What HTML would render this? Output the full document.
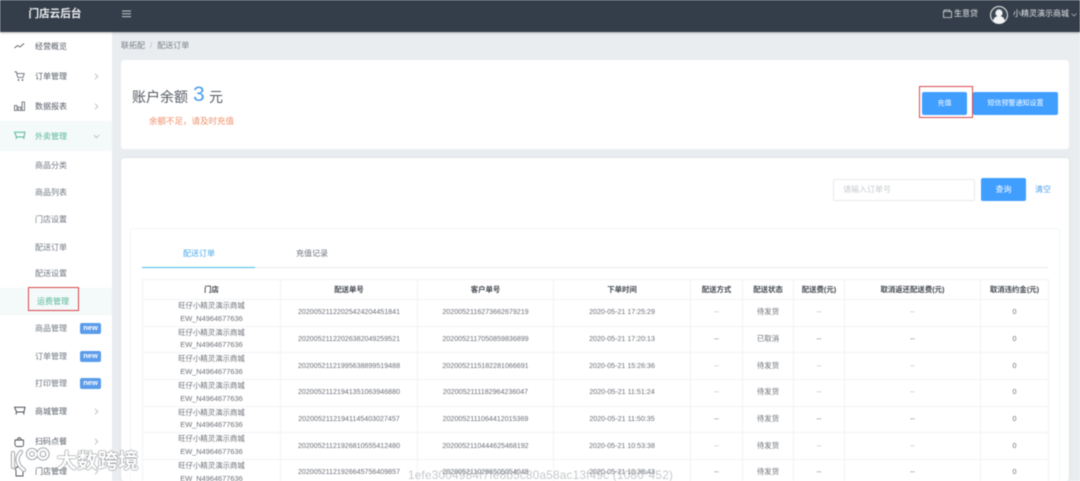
<!DOCTYPE html>
<html lang="zh"><head><meta charset="utf-8"><title>配送订单</title>
<style>
*{box-sizing:border-box}
html,body{margin:0;padding:0}
body{width:1080px;height:481px;overflow:hidden;position:relative;background:#fff;font-family:"Liberation Sans","Noto Sans CJK SC",sans-serif;color:#606266}
.a{position:absolute;white-space:nowrap}
#wrap{position:absolute;left:0;top:0;width:1080px;height:481px;overflow:hidden;filter:blur(.5px)}
.m{left:35px;font-size:8px;color:#555c66;line-height:12px}
.s{left:35px;font-size:8px;color:#6f7680;line-height:12px}
.chev{left:94px}
.new{left:80px;width:21px;height:10.500px;background:#5a9bea;color:#fff;border-radius:2px;font-size:7.500px;font-weight:bold;text-align:center;line-height:10.500px}
.btn{background:#409eff;color:#fff;border-radius:2px;text-align:center;font-size:7px}
table{position:absolute;left:142px;top:279px;border-collapse:collapse;table-layout:fixed;width:906px;font-size:7.100px;color:#6a6f76;text-align:center}
td,th{border:1px solid #f0f3f6;padding:0;overflow:hidden;white-space:nowrap}
th{height:20px;color:#444950;font-size:7.400px;font-weight:bold}
td{height:26.670px;line-height:12.800px}
td.n{font-size:7.400px}
td.z{color:#a6abb1}
</style></head><body><div id="wrap">
<div class="a" style="left:112px;top:31px;width:968px;height:450px;background:#e9edf0"></div>

<!-- top bar -->
<div class="a" style="left:0;top:0;width:1080px;height:31.500px;background:#343e4a;box-shadow:0 1px 2px rgba(0,0,0,.25)"></div>
<div class="a" style="left:28.500px;top:6.500px;font-size:10.600px;font-weight:bold;color:#eef0f2;line-height:15px">门店云后台</div>
<svg class="a" style="left:122px;top:10px" width="10" height="8"><path d="M0 1h9M0 3.800h9M0 6.600h9" stroke="#c6cbd0" stroke-width="1"/></svg>
<svg class="a" style="left:943px;top:9px" width="10" height="10"><path d="M.5 2.500h8v6h-8zM.5 2.500l1-1.500h5l1 1.500" fill="none" stroke="#d5d8db" stroke-width=".8"/></svg>
<div class="a" style="left:954px;top:8px;font-size:8px;color:#e6e8ea;line-height:12px">生意贷</div>
<svg class="a" style="left:990px;top:6px" width="18" height="18"><circle cx="9" cy="9" r="8.500" fill="#3d4753" stroke="#e8eaec"/><circle cx="9" cy="7" r="3.600" fill="#f2f3f4"/><path d="M3 15c1-4 3.500-5 6-5s5 1 6 5c-2 2-4 2.500-6 2.500s-4-.5-6-2.500z" fill="#f2f3f4"/></svg>
<div class="a" style="left:1013px;top:8px;font-size:8px;color:#e6e8ea;line-height:12px">小精灵演示商城</div>
<svg class="a" style="left:1071px;top:13px" width="6" height="4"><path d="M.5.500L3 3 5.500.500" fill="none" stroke="#b5babf" stroke-width=".7"/></svg>

<!-- sidebar -->
<div class="a" style="left:0;top:121px;width:112px;height:30px;background:#f4f9fa"></div>
<div class="a" style="left:0;top:288px;width:112px;height:27px;background:#f4f9fa"></div>

<svg class="a" style="left:14px;top:42px" width="11" height="8"><path d="M.5 6L3.500 3.500 6 5 10 1.500" fill="none" stroke="#555b63" stroke-width=".9"/></svg>
<div class="a m" style="top:41px">经营概览</div>
<svg class="a" style="left:14px;top:71px" width="12" height="11"><path d="M.5.800h1.800l1.500 5.700h5.200l1.200-4H2.800" fill="none" stroke="#555b63" stroke-width=".8"/><circle cx="4.500" cy="9" r=".9" fill="#555b63"/><circle cx="8.500" cy="9" r=".9" fill="#555b63"/></svg>
<div class="a m" style="top:71px">订单管理</div>
<svg class="a chev" style="top:73px" width="5" height="7"><path d="M1 .8L3.800 3.500 1 6.200" fill="none" stroke="#b0b5ba" stroke-width=".8"/></svg>
<svg class="a" style="left:14px;top:101px" width="11" height="10"><path d="M.5 4.500h2.500v5H.5zM4.300 6h2.500v3.500H4.300zM8 1h2.500v8.500H8z" fill="none" stroke="#555b63" stroke-width=".8"/></svg>
<div class="a m" style="top:101px">数据报表</div>
<svg class="a chev" style="top:103px" width="5" height="7"><path d="M1 .8L3.800 3.500 1 6.200" fill="none" stroke="#b0b5ba" stroke-width=".8"/></svg>
<svg class="a" style="left:14px;top:131px" width="12" height="10"><path d="M.5 1.200h10.500l-1 4.800H2.500zM2.500 6l-.5 2M9.500 6l.5 2" fill="none" stroke="#58b795" stroke-width="1"/></svg>
<div class="a m" style="top:131px;color:#58b795">外卖管理</div>
<svg class="a" style="left:93px;top:134px" width="7" height="5"><path d="M.8 1L3.500 3.800 6.200 1" fill="none" stroke="#b0b5ba" stroke-width=".8"/></svg>

<div class="a s" style="top:160px">商品分类</div>
<div class="a s" style="top:187px">商品列表</div>
<div class="a s" style="top:214px">门店设置</div>
<div class="a s" style="top:242px">配送订单</div>
<div class="a s" style="top:268px">配送设置</div>
<div class="a s" style="left:37px;top:296px;color:#58b795">运费管理</div>
<div class="a" style="left:28px;top:287px;width:51px;height:24px;border:1.500px solid #d9474b"></div>
<div class="a s" style="top:323px">商品管理</div><div class="a new" style="top:323px">new</div>
<div class="a s" style="top:351px">订单管理</div><div class="a new" style="top:351px">new</div>
<div class="a s" style="top:378px">打印管理</div><div class="a new" style="top:378px">new</div>

<svg class="a" style="left:14px;top:406px" width="12" height="10"><path d="M.5 1.200h10.500l-1 4.800H2.500zM2.500 6l-.5 2.500M9.500 6l.5 2.500" fill="none" stroke="#4a5058" stroke-width="1"/></svg>
<div class="a m" style="top:406px">商城管理</div>
<svg class="a chev" style="top:408px" width="5" height="7"><path d="M1 .8L3.800 3.500 1 6.200" fill="none" stroke="#b0b5ba" stroke-width=".8"/></svg>
<svg class="a" style="left:14px;top:436px" width="11" height="11"><path d="M1 4h8.500v4.500a2 2 0 0 1-2 2h-4.500a2 2 0 0 1-2-2zM3.500 4c0-3 3.500-3 3.500 0" fill="none" stroke="#4a5058" stroke-width=".9"/></svg>
<div class="a m" style="top:436px">扫码点餐</div>
<svg class="a chev" style="top:438px" width="5" height="7"><path d="M1 .8L3.800 3.500 1 6.200" fill="none" stroke="#b0b5ba" stroke-width=".8"/></svg>
<svg class="a" style="left:14px;top:466px" width="11" height="11"><path d="M1 4l1.500-3h6l1.500 3M2 4v6h7V4" fill="none" stroke="#4a5058" stroke-width=".9"/></svg>
<div class="a m" style="top:466px">门店管理</div>
<svg class="a chev" style="top:468px" width="5" height="7"><path d="M1 .8L3.800 3.500 1 6.200" fill="none" stroke="#b0b5ba" stroke-width=".8"/></svg>

<!-- breadcrumb -->
<div class="a" style="left:121px;top:40px;font-size:8px;color:#777d85;line-height:12px">联拓配<span style="margin:0 5px;color:#b5bac0">/</span>配送订单</div>

<!-- balance card -->
<div class="a" style="left:121px;top:60px;width:948px;height:89px;background:#fff;border-radius:3px"></div>
<div class="a" style="left:132px;top:88px;font-size:14px;color:#555b63;line-height:18px">账户余额</div>
<div class="a" style="left:193px;top:82px;font-size:21px;color:#4a9eea;line-height:26px">3</div>
<div class="a" style="left:209px;top:88px;font-size:14px;color:#555b63;line-height:18px">元</div>
<div class="a" style="left:149px;top:115px;font-size:8.500px;color:#f0906a;line-height:12px">余额不足，请及时充值</div>
<div class="a btn" style="left:922px;top:92px;width:45px;height:23px;line-height:23px">充值</div>
<div class="a btn" style="left:973px;top:92px;width:85px;height:23px;line-height:23px">短信预警通知设置</div>
<div class="a" style="left:919px;top:86px;width:54px;height:32px;border:1.500px solid #d9474b"></div>

<!-- list card -->
<div class="a" style="left:121px;top:158px;width:948px;height:323px;background:#fff;border-radius:3px;box-shadow:0 0 2px rgba(0,0,0,.1)"></div>
<div class="a" style="left:833px;top:179px;width:142px;height:22px;border:1px solid #e8ebee;border-radius:2px;background:#fff;font-size:8px;color:#c6cace;padding-left:9px;line-height:20px">请输入订单号</div>
<div class="a btn" style="left:981px;top:178px;width:45px;height:23px;line-height:23px;font-size:8px">查询</div>
<div class="a" style="left:1035px;top:184px;font-size:8px;color:#4a9eea;line-height:12px">清空</div>

<div class="a" style="left:130px;top:228px;width:930px;height:253px;border:1px solid #f3f5f7;border-bottom:0;border-radius:3px"></div>
<div class="a" style="left:183px;top:248px;font-size:8px;color:#4aa8ec;line-height:12px">配送订单</div>
<div class="a" style="left:296px;top:248px;font-size:8px;color:#6a7078;line-height:12px">充值记录</div>
<div class="a" style="left:142px;top:267px;width:906px;height:1px;background:#e6e9ed"></div>
<div class="a" style="left:142px;top:266.500px;width:113px;height:1.500px;background:#45bde8"></div>

<table>
<colgroup><col style="width:138px"><col style="width:137px"><col style="width:136px"><col style="width:137px"><col style="width:52px"><col style="width:51px"><col style="width:51px"><col style="width:136px"><col style="width:68px"></colgroup>
<tr><th>门店</th><th>配送单号</th><th>客户单号</th><th>下单时间</th><th>配送方式</th><th>配送状态</th><th>配送费(元)</th><th>取消返还配送费(元)</th><th>取消违约金(元)</th></tr>
<tr><td class="n">旺仔小精灵演示商城<br>EW_N4964677636</td><td>20200521122025424204451841</td><td>2020052116273662679219</td><td>2020-05-21 17:25:29</td><td class="z">--</td><td class="n">待发货</td><td class="z">--</td><td class="z">--</td><td>0</td></tr>
<tr><td class="n">旺仔小精灵演示商城<br>EW_N4964677636</td><td>20200521122026382049259521</td><td>2020052117050859836899</td><td>2020-05-21 17:20:13</td><td>--</td><td class="n">已取消</td><td>--</td><td>--</td><td>0</td></tr>
<tr><td class="n">旺仔小精灵演示商城<br>EW_N4964677636</td><td>20200521121995638899519488</td><td>2020052115182281066691</td><td>2020-05-21 15:26:36</td><td class="z">--</td><td class="n">待发货</td><td class="z">--</td><td class="z">--</td><td>0</td></tr>
<tr><td class="n">旺仔小精灵演示商城<br>EW_N4964677636</td><td>20200521121941351063946880</td><td>2020052111182964236047</td><td>2020-05-21 11:51:24</td><td class="z">--</td><td class="n">待发货</td><td class="z">--</td><td class="z">--</td><td>0</td></tr>
<tr><td class="n">旺仔小精灵演示商城<br>EW_N4964677636</td><td>20200521121941145403027457</td><td>2020052111064412015369</td><td>2020-05-21 11:50:35</td><td>--</td><td class="n">待发货</td><td>--</td><td>--</td><td>0</td></tr>
<tr><td class="n">旺仔小精灵演示商城<br>EW_N4964677636</td><td>20200521121926810555412480</td><td>2020052110444625468192</td><td>2020-05-21 10:53:38</td><td class="z">--</td><td class="n">待发货</td><td class="z">--</td><td class="z">--</td><td>0</td></tr>
<tr><td class="n">旺仔小精灵演示商城<br>EW_N4964677636</td><td>20200521121926645756409857</td><td>2020052110286505054048</td><td>2020-05-21 10:38:43</td><td>--</td><td class="n">待发货</td><td>--</td><td>--</td><td>0</td></tr>
</table>

<!-- watermarks -->
<div class="a" style="left:408px;top:468px;font-size:11.800px;color:rgba(150,155,160,.55);line-height:14px;letter-spacing:.2px">1efe3004984f7fe8b5c80a58ac13f49c (1080*452)</div>
<svg class="a" style="left:9px;top:447px" width="42" height="27"><g fill="none" stroke="#9a9ea3" stroke-width="4.200" stroke-linecap="round"><path d="M4 6v14M12 5C7 10 7 17 15 23"/><circle cx="23" cy="7" r="4"/><circle cx="34" cy="7" r="4.500"/></g><g fill="none" stroke="#fff" stroke-width="2.400" stroke-linecap="round"><path d="M4 6v14M12 5C7 10 7 17 15 23"/><circle cx="23" cy="7" r="4"/><circle cx="34" cy="7" r="4.500"/></g></svg>
<div class="a" style="left:56.500px;top:450px;font-size:20.500px;font-weight:bold;color:#fff;line-height:24px;text-shadow:0 0 1px #6f7378,0 0 1px #6f7378,0 0 1.500px #8f9398">大数跨境</div>
</div></body></html>
